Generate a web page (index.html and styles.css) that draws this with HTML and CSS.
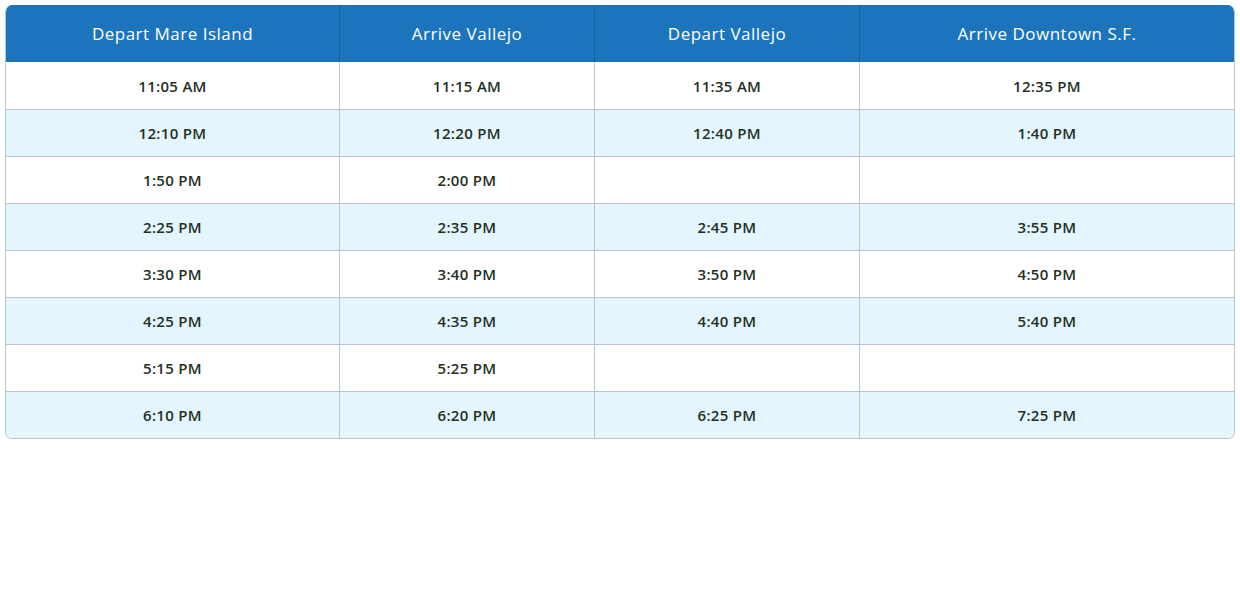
FILE: index.html
```html
<!DOCTYPE html>
<html>
<head>
<meta charset="utf-8">
<link rel="stylesheet" href="styles.css">
</head>
<body>
<div class="wrap">
<table class="sched">
<colgroup>
<col class="c1"><col class="c2"><col class="c3"><col class="c4">
</colgroup>
<thead>
<tr><th>Depart Mare Island</th><th>Arrive Vallejo</th><th>Depart Vallejo</th><th>Arrive Downtown S.F.</th></tr>
</thead>
<tbody>
<tr><td>11:05 AM</td><td>11:15 AM</td><td>11:35 AM</td><td>12:35 PM</td></tr>
<tr><td>12:10 PM</td><td>12:20 PM</td><td>12:40 PM</td><td>1:40 PM</td></tr>
<tr><td>1:50 PM</td><td>2:00 PM</td><td></td><td></td></tr>
<tr><td>2:25 PM</td><td>2:35 PM</td><td>2:45 PM</td><td>3:55 PM</td></tr>
<tr><td>3:30 PM</td><td>3:40 PM</td><td>3:50 PM</td><td>4:50 PM</td></tr>
<tr><td>4:25 PM</td><td>4:35 PM</td><td>4:40 PM</td><td>5:40 PM</td></tr>
<tr><td>5:15 PM</td><td>5:25 PM</td><td></td><td></td></tr>
<tr><td>6:10 PM</td><td>6:20 PM</td><td>6:25 PM</td><td>7:25 PM</td></tr>
</tbody>
</table>
</div>
</body>
</html>
```
FILE: styles.css
```css
html, body { margin: 0; padding: 0; background: #fff; }
.wrap { padding: 5px 6px 0 5px; }
.sched {
  width: 1230px;
  table-layout: fixed;
  border-collapse: separate;
  border-spacing: 0;
  border: 1px solid #b9c5d0;
  border-top: none;
  border-radius: 7px;
  overflow: hidden;
  font-family: "Open Sans", "Liberation Sans", sans-serif;
}
.c1 { width: 333px; }
.c2 { width: 255px; }
.c3 { width: 265px; }
.c4 { width: auto; }
.sched th {
  background: #1c75bc;
  color: #fff;
  height: 57px;
  padding: 0;
  font-size: 17px;
  font-weight: 500;
  letter-spacing: 0.5px;
  text-align: center;
  border-left: 1px solid #17609b;
}
.sched th:first-child, .sched td:first-child { border-left: none; }
.sched td {
  height: 46px;
  padding: 0;
  text-align: center;
  font-size: 15px;
  font-weight: 600;
  letter-spacing: 0.3px;
  color: #24301f;
  border-left: 1px solid #b9c5d0;
  border-top: 1px solid #b9c5d0;
}
.sched tbody tr:first-child td { border-top-color: #fff; }
.sched tbody tr:nth-child(even) td { background: #e4f5fd; }
```
